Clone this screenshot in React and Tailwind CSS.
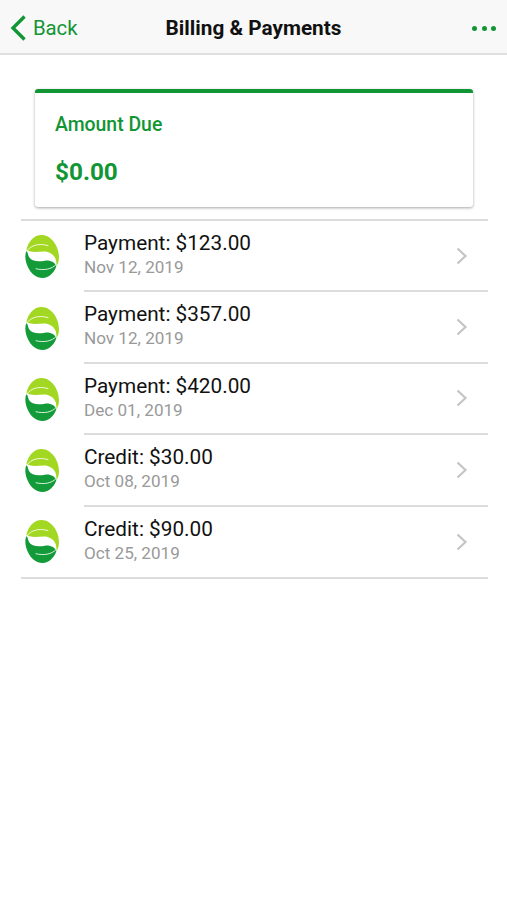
import React from "react";

const transactions = [
  { label: "Payment: $123.00", date: "Nov 12, 2019" },
  { label: "Payment: $357.00", date: "Nov 12, 2019" },
  { label: "Payment: $420.00", date: "Dec 01, 2019" },
  { label: "Credit: $30.00", date: "Oct 08, 2019" },
  { label: "Credit: $90.00", date: "Oct 25, 2019" },
];

/**
 * Round two-leaf logo shown beside each transaction.
 */
const LeafLogo = () => (
  <svg viewBox="0 0 102 129" className="h-[43px] w-[34px] shrink-0">
    <path
      d="M4 46C10 18 27 0 50 0C79 0 102 34 102 66C102 78 99 88 94 94C96 72 88 57 68 51C50 47 32 55 14 49C10 48 7 47 4 46Z"
      fill="#a3d822"
    />
    <path
      d="M4 48C-1 60 0 78 9 97C18 117 34 129 53 129C72 129 87 114 94 94C91 82 76 75 60 77C40 81 20 80 12 66C8 58 9 51 4 48Z"
      fill="#129b38"
    />
    <path d="M5 49C18 30 42 24 70 32" fill="none" stroke="#fff" strokeWidth="2.5" />
    <path d="M94 88C80 103 57 107 32 101" fill="none" stroke="#fff" strokeWidth="2.5" />
  </svg>
);

/**
 * Top bar with the back link, page title and overflow menu.
 */
const Header = () => (
  <header className="grid h-[55px] grid-cols-[1fr_auto_1fr] items-center border-b-2 border-[#e0e0e0] bg-[#f8f8f8] pt-[3px] pr-[11px] pl-[10px]">
    <button className="flex items-center gap-[7px] text-[20.4px] text-[#129535]">
      <svg viewBox="0 0 15 26" className="h-[26px] w-[16px]" fill="none" stroke="currentColor" strokeWidth="3.4">
        <path d="M14 1.5L2.5 13L14 24.5" />
      </svg>
      <span className="tracking-[-0.1px]">Back</span>
    </button>
    <h1 className="pt-px pl-px text-[20.75px] font-bold text-[#111]">Billing &amp; Payments</h1>
    <button className="flex justify-end gap-[4.5px]">
      <span className="size-[5px] rounded-full bg-[#129535]" />
      <span className="size-[5px] rounded-full bg-[#129535]" />
      <span className="size-[5px] rounded-full bg-[#129535]" />
    </button>
  </header>
);

const TransactionRow = ({ item, last }) => (
  <li className={`flex items-stretch ${last ? "h-[70px]" : "h-[71.4px]"}`}>
    <div className="flex w-[63px] items-center pl-[4px]">
      <LeafLogo />
    </div>
    <div className={`flex flex-1 items-center justify-between pr-[20px] ${last ? "" : "border-b-2 border-[#dcdcdc]"}`}>
      <div className="pb-[1.4px]">
        <p className="text-[20.75px] leading-[25px] text-[#111]">{item.label}</p>
        <p className="text-[17.1px] leading-[23px] text-[#999]">{item.date}</p>
      </div>
      <svg viewBox="0 0 12 18" className="h-[18px] w-[12px]" fill="none" stroke="#c4c4c4" strokeWidth="2.2">
        <path d="M1.5 1.5L9.5 9L1.5 16.5" />
      </svg>
    </div>
  </li>
);

export default function App() {
  return (
    <div className="min-h-screen bg-white font-['Roboto',sans-serif]">
      <Header />
      <main className="pt-[34px] pr-[19px] pl-[21px]">
        <section className="mr-[15px] ml-[14px] h-[118px] rounded-[3px] border-t-4 border-[#129535] pt-[19px] pl-[20px] text-[#129535] shadow-[0_1px_3px_rgba(0,0,0,0.35)]">
          <h2 className="text-[19.4px] leading-[26px] font-medium">Amount Due</h2>
          <p className="mt-[20px] text-[24.3px] leading-[28px] font-bold">$0.00</p>
        </section>
        <ul className="mt-[12px] border-t-2 border-b-2 border-[#dcdcdc]">
          {transactions.map((item, index) => (
            <TransactionRow key={index} item={item} last={index === transactions.length - 1} />
          ))}
        </ul>
      </main>
    </div>
  );
}
